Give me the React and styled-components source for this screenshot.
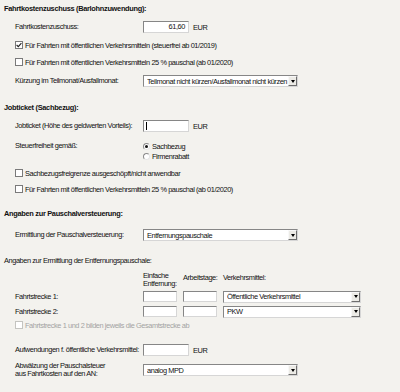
import React from 'react';
import styled, { createGlobalStyle } from 'styled-components';

const Global = createGlobalStyle`
  html, body {
    margin: 0;
    padding: 0;
    background: #f3f2ee;
  }
  body {
    font-family: "Liberation Sans", Arial, sans-serif;
    font-size: 7.4px;
    letter-spacing: -0.42px;
    color: #111;
  }
`;

const Page = styled.div`
  width: 400px;
  height: 392px;
  padding-left: 4px;
  box-sizing: border-box;
  overflow: hidden;
`;

const Heading = styled.div`
  margin-top: ${ props => props.mt }px;
  height: 12px;
  line-height: 12px;
  font-weight: bold;
  letter-spacing: -0.3px;
`;

const Note = styled.div`
  margin-top: ${ props => props.mt }px;
  height: 12px;
  line-height: 12px;
`;

const Row = styled.div`
  display: flex;
  align-items: ${ props => ( props.top ? 'flex-start' : 'center' ) };
  margin-top: ${ props => props.mt }px;
  height: ${ props => props.h || 12 }px;
  padding-left: 11px;
`;

const Label = styled.div`
  width: 128px;
  flex-shrink: 0;
  line-height: ${ props => props.lh || 8 }px;
  white-space: nowrap;
`;

const TextBox = styled.div`
  position: relative;
  box-sizing: border-box;
  width: ${ props => props.w || 46 }px;
  height: ${ props => props.h || 12 }px;
  background: #fff;
  border: 1px solid;
  border-color: #868686 #d6d6d6 #d6d6d6 #868686;
  text-align: right;
  padding-right: 3px;
  line-height: 10px;
  margin-right: ${ props => props.mr || 0 }px;
`;

const Caret = styled.span`
  position: absolute;
  left: 2px;
  top: 1px;
  width: 1px;
  height: 8px;
  background: #000;
`;

const Unit = styled.span`
  margin-left: 4px;
`;

const SelectBox = styled.div`
  display: flex;
  align-items: center;
  box-sizing: border-box;
  width: ${ props => props.w || 155 }px;
  height: ${ props => props.h || 12 }px;
  background: #fff;
  border: 1px solid;
  border-color: #868686 #d6d6d6 #d6d6d6 #868686;
  padding-left: 3px;
`;

const SelectText = styled.span`
  flex: 1;
  white-space: nowrap;
  overflow: hidden;
`;

const DropButton = styled.span`
  display: flex;
  align-items: center;
  justify-content: center;
  width: 9px;
  height: 10px;
  box-sizing: border-box;
  background: #ecebe6;
  border: 1px solid;
  border-color: #f8f8f8 #6e6e6e #6e6e6e #f8f8f8;
  &::after {
    content: '';
    border-left: 2.5px solid transparent;
    border-right: 2.5px solid transparent;
    border-top: 3px solid #000;
  }
`;

const CheckRow = styled.div`
  display: flex;
  align-items: center;
  margin-top: ${ props => props.mt }px;
  height: 12px;
  padding-left: 11px;
  color: ${ props => ( props.disabled ? '#a3a3a3' : 'inherit' ) };
  white-space: nowrap;
`;

const Box = styled.span`
  display: inline-flex;
  align-items: center;
  justify-content: center;
  box-sizing: border-box;
  width: 8px;
  height: 8px;
  margin-right: 2px;
  background: #fff;
  border: 1px solid ${ props => ( props.disabled ? '#c4c4c0' : '#7a7a7a' ) };
`;

const RadioList = styled.div`
  display: flex;
  flex-direction: column;
`;

const RadioItem = styled.div`
  display: flex;
  align-items: center;
  height: 10px;
`;

const Dot = styled.span`
  display: inline-flex;
  align-items: center;
  justify-content: center;
  box-sizing: border-box;
  width: 7px;
  height: 7px;
  margin-right: 2px;
  border-radius: 50%;
  background: #fff;
  border: 1px solid;
  border-color: #8a8a8a #e6e6e6 #e6e6e6 #8a8a8a;
  &::after {
    content: '';
    display: ${ props => ( props.on ? 'block' : 'none' ) };
    width: 3px;
    height: 3px;
    border-radius: 50%;
    background: #111;
  }
`;

const Columns = styled.div`
  display: flex;
  align-items: flex-start;
  margin-top: ${ props => props.mt }px;
  height: 17px;
  padding-left: 139px;
`;

const ColHead = styled.div`
  width: ${ props => props.w }px;
  line-height: 8px;
  padding-top: ${ props => props.pt || 0 }px;
  white-space: nowrap;
`;

const Check = () => (
  <svg width="6" height="6" viewBox="0 0 6 6">
    <path d="M0.6 3 L2.3 4.7 L5.4 1.2" fill="none" stroke="#222" strokeWidth="1.1" />
  </svg>
);

function Dropdown( { value, w } ) {
  return (
    <SelectBox w={w}>
      <SelectText>{value}</SelectText>
      <DropButton />
    </SelectBox>
  );
}

export default function App() {
  return (
    <Page>
      <Global />
      <Heading mt={3}>Fahrtkostenzuschuss (Barlohnzuwendung):</Heading>
      <Row mt={6}>
        <Label>Fahrtkostenzuschuss:</Label>
        <TextBox>61,60</TextBox>
        <Unit>EUR</Unit>
      </Row>
      <CheckRow mt={6}>
        <Box><Check /></Box>
        Für Fahrten mit öffentlichen Verkehrsmitteln (steuerfrei ab 01/2019)
      </CheckRow>
      <CheckRow mt={5}>
        <Box />
        Für Fahrten mit öffentlichen Verkehrsmitteln 25 % pauschal (ab 01/2020)
      </CheckRow>
      <Row mt={7}>
        <Label>Kürzung im Teilmonat/Ausfallmonat:</Label>
        <Dropdown value="Teilmonat nicht kürzen/Ausfallmonat nicht kürzen" />
      </Row>

      <Heading mt={15}>Jobticket (Sachbezug):</Heading>
      <Row mt={6}>
        <Label>Jobticket (Höhe des geldwerten Vorteils):</Label>
        <TextBox><Caret /></TextBox>
        <Unit>EUR</Unit>
      </Row>
      <Row mt={9} h={20} top>
        <Label lh={10}>Steuerfreiheit gemäß:</Label>
        <RadioList>
          <RadioItem><Dot on />Sachbezug</RadioItem>
          <RadioItem><Dot />Firmenrabatt</RadioItem>
        </RadioList>
      </Row>
      <CheckRow mt={6}>
        <Box />
        Sachbezugsfreigrenze ausgeschöpft/nicht anwendbar
      </CheckRow>
      <CheckRow mt={4}>
        <Box />
        Für Fahrten mit öffentlichen Verkehrsmitteln 25 % pauschal (ab 01/2020)
      </CheckRow>

      <Heading mt={13}>Angaben zur Pauschalversteuerung:</Heading>
      <Row mt={9}>
        <Label>Ermittlung der Pauschalversteuerung:</Label>
        <Dropdown value="Entfernungspauschale" />
      </Row>
      <Note mt={14}>Angaben zur Ermittlung der Entfernungspauschale:</Note>
      <Columns mt={5}>
        <ColHead w={40}>Einfache<br />Entfernung:</ColHead>
        <ColHead w={40} pt={2}>Arbeitstage:</ColHead>
        <ColHead w={80} pt={2}>Verkehrsmittel:</ColHead>
      </Columns>
      <Row mt={2} h={11}>
        <Label>Fahrtstrecke 1:</Label>
        <TextBox w={34} h={11} mr={6} />
        <TextBox w={34} h={11} mr={6} />
        <Dropdown w={138} value="Öffentliche Verkehrsmittel" />
      </Row>
      <Row mt={4} h={11}>
        <Label>Fahrtstrecke 2:</Label>
        <TextBox w={34} h={11} mr={6} />
        <TextBox w={34} h={11} mr={6} />
        <Dropdown w={138} value="PKW" />
      </Row>
      <CheckRow mt={2} disabled>
        <Box disabled />
        Fahrtstrecke 1 und 2 bilden jeweils die Gesamtstrecke ab
      </CheckRow>
      <Row mt={13}>
        <Label>Aufwendungen f. öffentliche Verkehrsmittel:</Label>
        <TextBox />
        <Unit>EUR</Unit>
      </Row>
      <Row mt={8}>
        <Label>Abwälzung der Pauschalsteuer<br />aus Fahrtkosten auf den AN:</Label>
        <Dropdown value="analog MPD" />
      </Row>
    </Page>
  );
}
